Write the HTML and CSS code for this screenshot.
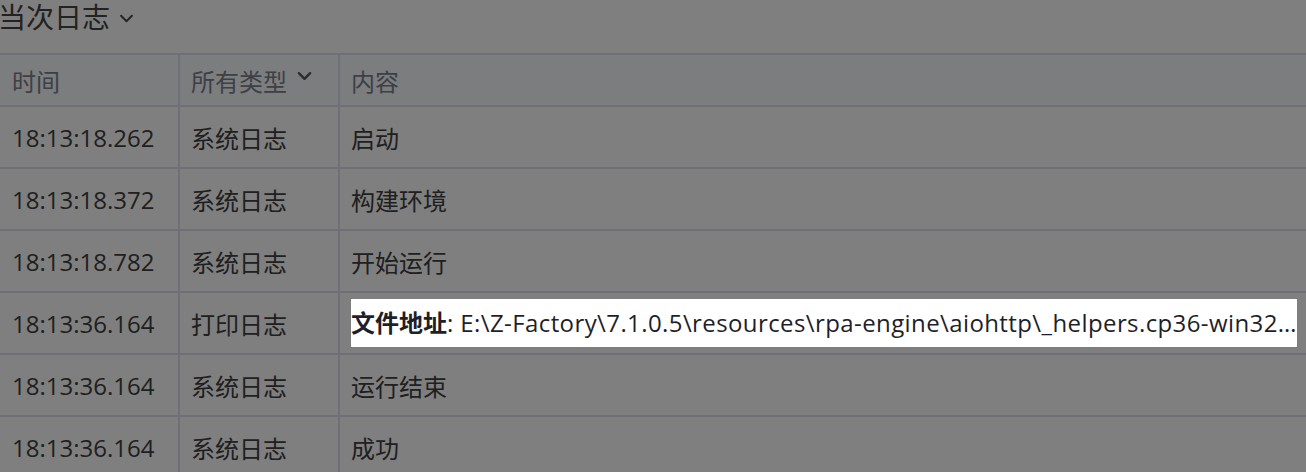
FILE: index.html
```html
<!DOCTYPE html>
<html lang="zh-CN">
<head>
<meta charset="utf-8">
<title>当次日志</title>
<link rel="stylesheet" href="styles.css">
</head>
<body>
<div class="panel">
  <div class="title">
    <span class="title-text">当次日志</span>
    <svg class="chev chev-title" viewBox="0 0 16 10" width="15" height="9"><path d="M2 2 L8 8 L14 2" fill="none" stroke="currentColor" stroke-width="2.2" stroke-linecap="round" stroke-linejoin="round"/></svg>
  </div>
  <div class="log-table">
    <div class="cell head first">时间</div>
    <div class="cell head">所有类型<svg class="chev chev-head" viewBox="0 0 16 10" width="15" height="10"><path d="M2 2 L8 8 L14 2" fill="none" stroke="currentColor" stroke-width="2.6" stroke-linecap="round" stroke-linejoin="round"/></svg></div>
    <div class="cell head last">内容</div>

    <div class="cell first">18:13:18.262</div>
    <div class="cell">系统日志</div>
    <div class="cell last">启动</div>

    <div class="cell first">18:13:18.372</div>
    <div class="cell">系统日志</div>
    <div class="cell last">构建环境</div>

    <div class="cell first">18:13:18.782</div>
    <div class="cell">系统日志</div>
    <div class="cell last">开始运行</div>

    <div class="cell first">18:13:36.164</div>
    <div class="cell">打印日志</div>
    <div class="cell last"><div class="content focus"><b>文件地址</b>: <span class="path">E:\Z-Factory\7.1.0.5\resources\rpa-engine\aiohttp\_helpers.cp36-win32.pyd</span></div></div>

    <div class="cell first">18:13:36.164</div>
    <div class="cell">系统日志</div>
    <div class="cell last">运行结束</div>

    <div class="cell first">18:13:36.164</div>
    <div class="cell">系统日志</div>
    <div class="cell last">成功</div>
  </div>
</div>
<div class="mask"></div>
</body>
</html>
```

FILE: styles.css
```css
html, body {
  margin: 0;
  padding: 0;
  background: #ffffff;
  overflow: hidden;
}
body {
  font-family: "Open Sans", "Noto Sans CJK SC", sans-serif;
  color: #404040;
  width: 1306px;
  height: 472px;
}
.panel {
  display: flex;
  flex-direction: column;
}
.title {
  height: 53px;
  display: flex;
  align-items: flex-start;
  gap: 9px;
  color: #444444;
}
.title-text {
  font-size: 28px;
  line-height: 34px;
  margin-left: -2px;
}
.chev-title {
  margin-top: 14px;
  color: #4a4a4a;
}
.log-table {
  display: grid;
  grid-template-columns: 178px 158px 1fr;
  grid-auto-rows: 60px;
  grid-template-rows: 50px;
  gap: 2px;
  padding-top: 2px;
  background: #dee0ea;
}
.cell {
  background: #ffffff;
  display: flex;
  align-items: center;
  padding: 0 11px;
  font-size: 24px;
  white-space: nowrap;
  min-width: 0;
}
.cell.first {
  padding-left: 12px;
}
.cell.last {
  padding-right: 9px;
}
.cell.head {
  background: #f8fafe;
  color: #7a808a;
}
.chev-head {
  margin-left: 10px;
  margin-bottom: 8px;
  color: #555a62;
}
.content {
  flex: 1;
  min-width: 0;
  overflow: hidden;
  text-overflow: ellipsis;
  white-space: nowrap;
  line-height: 48px;
  height: 48px;
  letter-spacing: 0.4px;
}
.content b {
  font-weight: 700;
  letter-spacing: 0;
}
.focus {
  position: relative;
  z-index: 20;
  background: #ffffff;
  color: #1f1f29;
}
.mask {
  position: fixed;
  inset: 0;
  background: rgba(0, 0, 0, 0.5);
  z-index: 10;
}
```
